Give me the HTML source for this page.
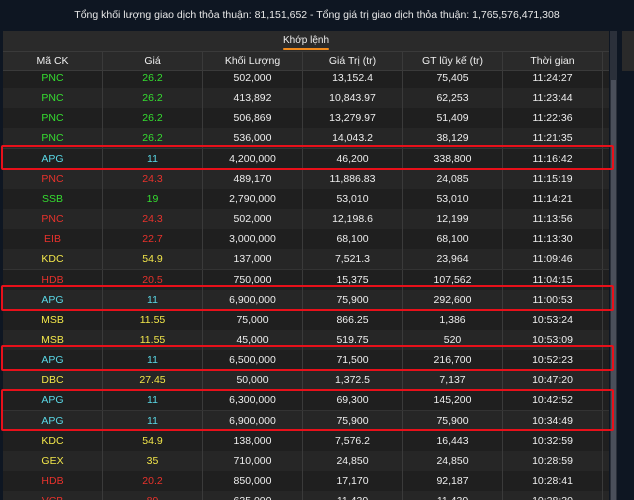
<!DOCTYPE html><html><head><meta charset="utf-8"><style>
body{margin:0;width:634px;height:500px;overflow:hidden;background:#0e1622;font-family:"Liberation Sans",sans-serif;font-size:10.5px;color:#eee;position:relative}
.top{position:absolute;top:9px;left:0;width:634px;text-align:center;font-size:10.5px;color:#e8e8e8}
.panel{position:absolute;left:3px;top:31px;width:606px;height:469px;background:#222;overflow:hidden}
.tab{position:absolute;left:0;top:0;width:606px;height:20px;background:#2a2a2a;text-align:center;line-height:19px;font-size:10px}
.tab span{position:relative}
.tab span:after{content:"";position:absolute;left:0;right:0;bottom:-4px;height:2px;background:#f08a1c;border-radius:1px}
.hdr{position:absolute;top:20px;left:0;height:18px;width:606px;background:#2a2a2a;border-top:1px solid #3a3a3a;border-bottom:1px solid #3a3a3a;z-index:2}
.row{position:absolute;left:0;width:606px;height:20px;border-bottom:1px solid #333}
.c{position:absolute;top:0;height:100%;width:100px;text-align:center;border-right:1px solid #3a3a3a;box-sizing:border-box;line-height:20px}
.hdr .c{line-height:18px}
.g{color:#35dd30}.r{color:#e8322c}.y{color:#f2e64a}.a{color:#5ad8e6}
.box{position:absolute;border:2.5px solid #e8101a;border-radius:2px;left:1px;width:609px}
.sb{position:absolute;left:610px;top:31px;width:7px;height:469px;background:#2b303a}
.sbt{position:absolute;left:611px;top:80px;width:5px;height:420px;background:#4a4f5a}
.rp{position:absolute;left:622px;top:31px;width:12px;height:40px;background:#2a2a2a}
</style></head><body>
<div class="top">Tổng khối lượng giao dịch thỏa thuận: 81,151,652 - Tổng giá trị giao dịch thỏa thuận: 1,765,576,471,308</div>
<div class="panel">
<div class="tab"><span>Khớp lệnh</span></div>
<div class="hdr"><div class="c" style="left:0">Mã CK</div><div class="c" style="left:100px">Giá</div><div class="c" style="left:200px">Khối Lượng</div><div class="c" style="left:300px">Giá Trị (tr)</div><div class="c" style="left:400px">GT lũy kế (tr)</div><div class="c" style="left:500px">Thời gian</div></div>
<div id="rows"></div>
</div>
<div class="sb"></div><div class="sbt"></div><div class="rp"></div>
<div class="box" style="top:145px;height:21px"></div>
<div class="box" style="top:285px;height:22px"></div>
<div class="box" style="top:345px;height:22px"></div>
<div class="box" style="top:389px;height:38px"></div>
<script>
var d=[["PNC","26.2","502,000","13,152.4","75,405","11:24:27","g"],["PNC","26.2","413,892","10,843.97","62,253","11:23:44","g"],["PNC","26.2","506,869","13,279.97","51,409","11:22:36","g"],["PNC","26.2","536,000","14,043.2","38,129","11:21:35","g"],["APG","11","4,200,000","46,200","338,800","11:16:42","a"],["PNC","24.3","489,170","11,886.83","24,085","11:15:19","r"],["SSB","19","2,790,000","53,010","53,010","11:14:21","g"],["PNC","24.3","502,000","12,198.6","12,199","11:13:56","r"],["EIB","22.7","3,000,000","68,100","68,100","11:13:30","r"],["KDC","54.9","137,000","7,521.3","23,964","11:09:46","y"],["HDB","20.5","750,000","15,375","107,562","11:04:15","r"],["APG","11","6,900,000","75,900","292,600","11:00:53","a"],["MSB","11.55","75,000","866.25","1,386","10:53:24","y"],["MSB","11.55","45,000","519.75","520","10:53:09","y"],["APG","11","6,500,000","71,500","216,700","10:52:23","a"],["DBC","27.45","50,000","1,372.5","7,137","10:47:20","y"],["APG","11","6,300,000","69,300","145,200","10:42:52","a"],["APG","11","6,900,000","75,900","75,900","10:34:49","a"],["KDC","54.9","138,000","7,576.2","16,443","10:32:59","y"],["GEX","35","710,000","24,850","24,850","10:28:59","y"],["HDB","20.2","850,000","17,170","92,187","10:28:41","r"],["VCB","89","635,000","11,430","11,430","10:28:30","r"]];
var h="";d.forEach(function(r,i){var t=37+i*20.15;h+='<div class="row" style="top:'+t+'px;background:'+(i%2?'#262626':'#1f1f1f')+'">';for(var j=0;j<6;j++){h+='<div class="c '+(j<2?r[6]:'')+'" style="left:'+j*100+'px">'+r[j]+'</div>';}h+='</div>';});
document.getElementById("rows").innerHTML=h;
</script>
</body></html>
